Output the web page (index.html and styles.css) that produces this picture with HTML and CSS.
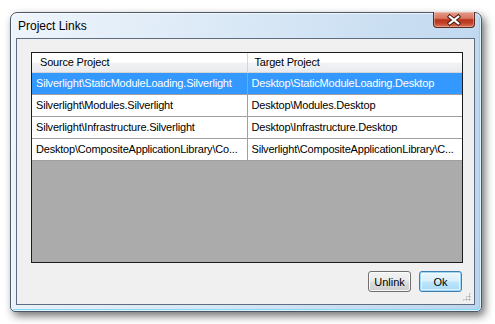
FILE: index.html
```html
<!DOCTYPE html>
<html>
<head>
    <title>Project Links</title>
    <link rel="stylesheet" href="styles.css">
</head>
<body>
    <div class="window">
        <div class="titlebar">
            <span class="title">Project Links</span>
            <button class="close" title="Close">
                <svg width="42" height="16" viewBox="0 0 42 16">
                    <path d="M16.5 4.5 L25.5 11.5 M25.5 4.5 L16.5 11.5" stroke="#4a2118" stroke-width="4.2" stroke-linecap="square" fill="none"/>
                    <path d="M16.5 4.5 L25.5 11.5 M25.5 4.5 L16.5 11.5" stroke="#ffffff" stroke-width="2.2" stroke-linecap="square" fill="none"/>
                </svg>
            </button>
        </div>

        <div class="client">
            <div class="listbox">
                <table class="grid">
                    <tr>
                        <th>Source Project</th>
                        <th>Target Project</th>
                    </tr>
                    <tr class="selected">
                        <td>Silverlight\StaticModuleLoading.Silverlight</td>
                        <td>Desktop\StaticModuleLoading.Desktop</td>
                    </tr>
                    <tr>
                        <td>Silverlight\Modules.Silverlight</td>
                        <td>Desktop\Modules.Desktop</td>
                    </tr>
                    <tr>
                        <td>Silverlight\Infrastructure.Silverlight</td>
                        <td>Desktop\Infrastructure.Desktop</td>
                    </tr>
                    <tr>
                        <td>Desktop\CompositeApplicationLibrary\Co...</td>
                        <td>Silverlight\CompositeApplicationLibrary\C...</td>
                    </tr>
                </table>
            </div>

            <div class="actions">
                <button class="btn">Unlink</button>
                <button class="btn default">Ok</button>
            </div>

            <span class="grip"></span>
        </div>
    </div>
</body>
</html>
```

FILE: styles.css
```css
html, body {
    margin: 0;
    padding: 0;
    background: #ffffff;
}
body {
    width: 495px;
    height: 324px;
    overflow: hidden;
    font-family: "Liberation Sans", Arial, sans-serif;
}

.window {
    box-sizing: border-box;
    width: 472px;
    height: 300px;
    margin: 12px 0 0 10px;
    border: 1px solid #4d5866;
    border-radius: 7px 7px 5px 5px;
    background: linear-gradient(100deg, #eef4fb 0%, #d9e8f6 45%, #bcd5ee 100%);
    box-shadow: inset 0 0 0 1px rgba(255, 255, 255, 0.7),
                inset -2px -2px 0 #86d9f4,
                3px 4px 9px rgba(0, 0, 0, 0.55);
    display: flex;
    flex-direction: column;
}

.titlebar {
    height: 25px;
    display: flex;
    justify-content: space-between;
    align-items: flex-start;
    padding: 0 6px 0 7px;
}
.title {
    font-size: 12px;
    line-height: 14px;
    padding-top: 6px;
    color: #000000;
}
.close {
    width: 42px;
    height: 16px;
    padding: 0;
    margin: -1px 0 0 0;
    border: 1px solid #5b2a20;
    border-top: none;
    border-radius: 0 0 4px 4px;
    background: linear-gradient(to bottom, #e49c8a 0%, #d8765f 42%, #b8321a 52%, #c2432a 75%, #de7458 100%);
    box-shadow: inset 0 0 0 1px rgba(255, 255, 255, 0.3);
    display: flex;
    align-items: center;
    justify-content: center;
}
.close svg {
    display: block;
}

.client {
    position: relative;
    box-sizing: border-box;
    width: 459px;
    height: 267px;
    margin: 0 6px 0 5px;
    border: 1px solid #5e6e80;
    background: #f0f0f0;
    padding: 13px 11px 12px 14px;
    display: flex;
    flex-direction: column;
}

.listbox {
    box-sizing: border-box;
    width: 432px;
    height: 211px;
    border: 1px solid #1c1c1c;
    background: #ababab;
    overflow: hidden;
}

table.grid {
    border-collapse: collapse;
    table-layout: fixed;
    width: 430px;
    font-size: 11px;
    letter-spacing: -0.2px;
}
.grid th, .grid td {
    width: 215px;
    box-sizing: border-box;
    white-space: nowrap;
    overflow: hidden;
    text-align: left;
    font-weight: normal;
    color: #000000;
}
.grid th {
    height: 19px;
    padding: 0 0 0 8px;
    background: linear-gradient(to bottom, #ffffff 0%, #ffffff 45%, #f1f2f4 55%, #eaebee 100%);
    border-right: 1px solid #d5d5d5;
    border-bottom: 1px solid #d5d5d5;
}
.grid th + th {
    padding-left: 7px;
}
.grid td {
    height: 22px;
    padding: 0 0 0 4px;
    background: #ffffff;
    border-right: 1px solid #a0a0a0;
    border-bottom: 1px solid #a0a0a0;
}
.grid tr.selected td {
    background: #3399ff;
    color: #ffffff;
}

.actions {
    display: flex;
    justify-content: flex-end;
    gap: 8px;
    margin-top: 8px;
    padding-right: 1px;
}
.btn {
    box-sizing: border-box;
    width: 43px;
    height: 21px;
    padding: 0;
    border: 1px solid #707070;
    border-radius: 3px;
    background: linear-gradient(to bottom, #f2f2f2 0%, #ebebeb 48%, #dddddd 52%, #cfcfcf 100%);
    box-shadow: inset 0 0 0 1px rgba(255, 255, 255, 0.8);
    font-family: "Liberation Sans", Arial, sans-serif;
    font-size: 11px;
    color: #000000;
}
.btn.default {
    border-color: #3c7fb1;
    background: linear-gradient(to bottom, #eaf6fd 0%, #d9f0fc 48%, #bee6fd 52%, #a7d9f5 100%);
    box-shadow: inset 0 0 0 1px #9fd6f7, inset 0 0 0 2px rgba(255, 255, 255, 0.6);
}

.grip {
    position: absolute;
    right: 3px;
    bottom: 3px;
    width: 9px;
    height: 9px;
    background-image: radial-gradient(circle, #a4a4a4 0.8px, transparent 1.2px);
    background-size: 3px 3px;
    clip-path: polygon(100% 0, 100% 100%, 0 100%);
}
```
